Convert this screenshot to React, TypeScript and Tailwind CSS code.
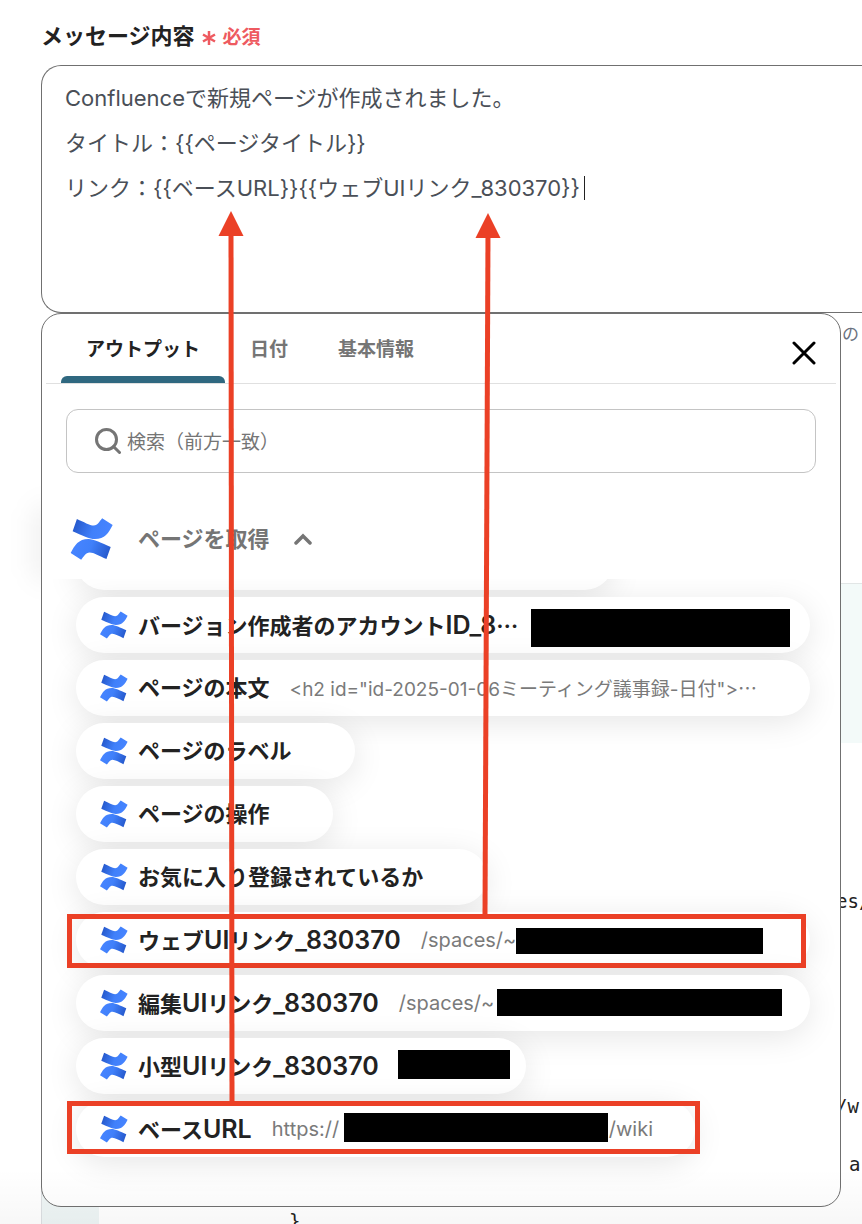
import { useState } from 'react';

type Output = {
  label: string;
  size: string;
  value?: string;
  tail?: string;
  redaction?: string;
  mark?: string;
  clipped?: boolean;
};

const OUTPUTS: Output[] = [
  {
    label: 'バージョン作成者のアカウントID_8',
    size: 'w-[734px]',
    redaction: 'left-[455px] top-3 w-[259px] h-[38px]',
    clipped: true,
  },
  {
    label: 'ページの本文',
    size: 'w-[734px]',
    value: '<h2 id="id-2025-01-06ミーティング議事録-日付">',
    clipped: true,
  },
  { label: 'ページのラベル', size: 'w-[279px]' },
  { label: 'ページの操作', size: 'w-[257px]' },
  { label: 'お気に入り登録されているか', size: 'w-[411px]' },
  {
    label: 'ウェブUIリンク_830370',
    size: 'w-[734px]',
    value: '/spaces/~',
    redaction: 'left-[440px] top-4 w-[247px] h-[26px]',
    mark: '-left-[9px] top-[2px] right-1 h-[54px]',
  },
  {
    label: '編集UIリンク_830370',
    size: 'w-[734px]',
    value: '/spaces/~',
    redaction: 'left-[421px] top-[14px] w-[285px] h-[27px]',
  },
  {
    label: '小型UIリンク_830370',
    size: 'w-[450px]',
    redaction: 'left-[322px] top-3 w-[112px] h-[29px]',
  },
  {
    label: 'ベースURL',
    size: 'w-[619px]',
    value: 'https://',
    tail: ':/wiki',
    redaction: 'left-[268px] top-3 w-[264px] h-[29px]',
    mark: '-left-[9px] top-0 -right-[5px] h-[53px]',
  },
];

const TABS = ['アウトプット', '日付', '基本情報'];

const MESSAGE = `Confluenceで新規ページが作成されました。
タイトル：{{ページタイトル}}
リンク：{{ベースURL}}{{ウェブUIリンク_830370}}`;

function ConfluenceLogo({ className }: { className: string }) {
  const half = 'M19 3 C40 12 58 23 70 23 C83 23 88 10 96 1 L128 21 C116 45 104 64 74 64 C58 64 34 52 6 40 Z';
  return (
    <svg viewBox="0 0 130 128" className={className} aria-hidden="true">
      <defs>
        <linearGradient id="cf" x1="0" y1="0" x2="1" y2="0.2">
          <stop offset="0" stopColor="#2152c4" />
          <stop offset="0.6" stopColor="#4080fa" />
          <stop offset="1" stopColor="#4684ff" />
        </linearGradient>
      </defs>
      <path d={half} fill="url(#cf)" />
      <path d={half} fill="url(#cf)" transform="rotate(180 64 64)" />
    </svg>
  );
}

function Ellipsis() {
  return <span className="font-['Noto_Sans_CJK_JP',sans-serif]">…</span>;
}

// latin runs are set a little larger than the kana beside them
function MixedLabel({ text }: { text: string }) {
  return text.split(/([\x20-\x7e]+)/).map((run, i) =>
    i % 2 ? (
      <span key={i} className="text-[25px] leading-none font-semibold">
        {run}
      </span>
    ) : (
      run
    ),
  );
}

function OutputPill({ item }: { item: Output }) {
  return (
    <li>
      <button
        type="button"
        className={`relative flex h-14 max-w-full items-center rounded-full bg-white pl-6 text-left whitespace-nowrap shadow-[0_6px_32px_rgba(0,0,0,0.1)] ${item.size}`}
      >
        <ConfluenceLogo className="h-7 w-7 shrink-0" />
        <span className="ml-[10px] text-[22px] leading-none font-bold text-[#222]">
          <MixedLabel text={item.label} />
          {item.clipped && !item.value && <Ellipsis />}
        </span>
        {item.value && (
          <span
            className={`ml-5 leading-none text-[#7a7a7a] ${item.clipped ? 'text-[19px]' : 'text-[20px]'}`}
          >
            {item.value}
            {item.clipped && <Ellipsis />}
          </span>
        )}
        {item.tail && (
          <span className="mr-[42px] ml-auto text-[20px] leading-none text-[#7a7a7a]">{item.tail}</span>
        )}
        {item.redaction && <span className={`absolute bg-black ${item.redaction}`} />}
        {item.mark && <span className={`absolute border-5 border-[#eb4026] ${item.mark}`} />}
      </button>
    </li>
  );
}

function OutputPicker() {
  const [tab, setTab] = useState(TABS[0]);

  return (
    <div className="relative mr-[21px] mb-[17px] rounded-[20px] border border-[#707070] bg-white [grid-area:1/1]">
      {/* tabs */}
      <div className="mx-1 flex h-[70px] items-stretch border-b border-[#e0e0e0] pl-[15px]">
        {TABS.map((t) => (
          <button
            key={t}
            type="button"
            onClick={() => setTab(t)}
            className={`relative px-[25px] pt-1 text-[19px] font-bold ${t === tab ? 'text-[#222]' : 'text-[#757575]'}`}
          >
            {t}
            {t === tab && <span className="absolute inset-x-0 bottom-0 h-[7px] rounded-t-md bg-[#2f6880]" />}
          </button>
        ))}
        <button type="button" aria-label="閉じる" className="mt-2 mr-5 ml-auto">
          <svg viewBox="0 0 24 24" className="size-6" stroke="#000" strokeWidth="3" strokeLinecap="round">
            <path d="M2 2 L22 22 M22 2 L2 22" />
          </svg>
        </button>
      </div>

      {/* search */}
      <label className="mx-6 mt-[25px] flex h-16 items-center gap-[6px] rounded-xl border border-[#c4c4c4] pl-7">
        <svg viewBox="0 0 26 26" className="size-[26px] shrink-0" fill="none" stroke="#757575" strokeWidth="3">
          <circle cx="11.5" cy="11.5" r="10" />
          <path d="M18.5 18.5 L24.5 24.5" strokeLinecap="round" />
        </svg>
        <input
          type="text"
          aria-label="検索"
          placeholder="検索（前方一致）"
          className="min-w-0 flex-1 pt-1 text-[19px] outline-none placeholder:text-[#757575]"
        />
      </label>

      {/* group */}
      <button type="button" className="mt-9 ml-7 flex h-[60px] items-center">
        <ConfluenceLogo className="h-[42px] w-11" />
        <span className="ml-6 text-[22px] font-bold text-[#757575]">ページを取得</span>
        <svg
          viewBox="0 0 18 12"
          className="ml-6 h-3 w-[18px]"
          fill="none"
          stroke="#757575"
          strokeWidth="3.5"
          strokeLinecap="round"
        >
          <path d="M2 10 L9 3 L16 10" />
        </svg>
      </button>

      <ul className="mt-[10px] flex flex-col gap-[7px] overflow-hidden rounded-b-[20px] pr-[30px] pb-[49px] pl-[34px]">
        <li className="-mt-[45px] h-14 w-[537px] shrink-0 rounded-full bg-white shadow-[0_6px_32px_rgba(0,0,0,0.1)]" />
        {OUTPUTS.map((item) => (
          <OutputPill key={item.label} item={item} />
        ))}
      </ul>
    </div>
  );
}

function PageBehind() {
  return (
    <div className="flex min-w-0 flex-col font-['DejaVu_Sans_Mono',monospace] text-[19px] leading-[30px] text-[#222] [grid-area:1/1]">
      <p className="ml-[801px] font-['Noto_Sans_CJK_JP',sans-serif] text-[17px] leading-10 text-[#6b7280]">の</p>
      <div className="mt-[230px] h-40 border-t border-[#e2e6e6] bg-[#f3faf9]" />
      <p className="mt-[143px] ml-[795px]">es/</p>
      <p className="mt-[175px] ml-[795px]">/w</p>
      <p className="mt-7 ml-[808px]">a</p>
      <div className="mt-[11px] flex h-[34px]">
        <div className="w-[58px] border-l border-[#dcdfe2] bg-[#eef5f5]" />
        <span className="ml-[190px] pt-4">{'}'}</span>
      </div>
    </div>
  );
}

function Arrows() {
  return (
    <svg
      className="pointer-events-none absolute top-0 left-0 h-[1110px] w-[520px]"
      viewBox="0 0 520 1110"
      fill="#eb4026"
      stroke="#eb4026"
      aria-hidden="true"
    >
      <path d="M231 230 L232 1103" strokeWidth="5" />
      <path d="M231 211 L243.500 236 L218.500 236 Z" stroke="none" />
      <path d="M488 232 L485 915" strokeWidth="5" />
      <path d="M488 213 L500.500 238 L475.500 238 Z" stroke="none" />
    </svg>
  );
}

export default function App() {
  return (
    <main
      lang="ja"
      className="relative min-h-screen overflow-hidden bg-white pl-[41px] font-['Inter','Noto_Sans_CJK_JP',sans-serif]"
    >
      <label htmlFor="message" className="flex items-center gap-[6px] pt-6 pb-[17px] leading-6 font-bold">
        <span className="text-[22px] text-[#222]">メッセージ内容</span>
        <svg viewBox="0 0 16 16" className="mt-1 size-4" stroke="#ee5a60" strokeWidth="2.5" aria-hidden="true">
          <path d="M8 1 V15 M2 4.500 L14 11.500 M14 4.500 L2 11.500" />
        </svg>
        <span className="mt-1 text-[19px] leading-5 text-[#ee5a60]">必須</span>
      </label>

      <div className="relative">
        <textarea
          id="message"
          defaultValue={MESSAGE}
          className="block h-[248px] w-full resize-none rounded-l-[20px] border border-r-0 border-[#707070] px-[23px] py-[10px] text-[22px] leading-[45px] text-[#4a4f57] outline-none"
        />
        <span className="absolute top-[111px] left-[543px] h-6 w-px bg-[#222]" />
      </div>

      <div className="relative grid grid-cols-[minmax(0,1fr)]">
        <PageBehind />
        <span className="absolute top-[190px] -left-[10px] h-20 w-8 rounded-full bg-black/5 blur-md" />
        <OutputPicker />
      </div>

      <div className="pointer-events-none absolute inset-x-0 bottom-0 h-14 bg-linear-to-t from-black/[0.03] to-transparent" />
      <Arrows />
    </main>
  );
}
